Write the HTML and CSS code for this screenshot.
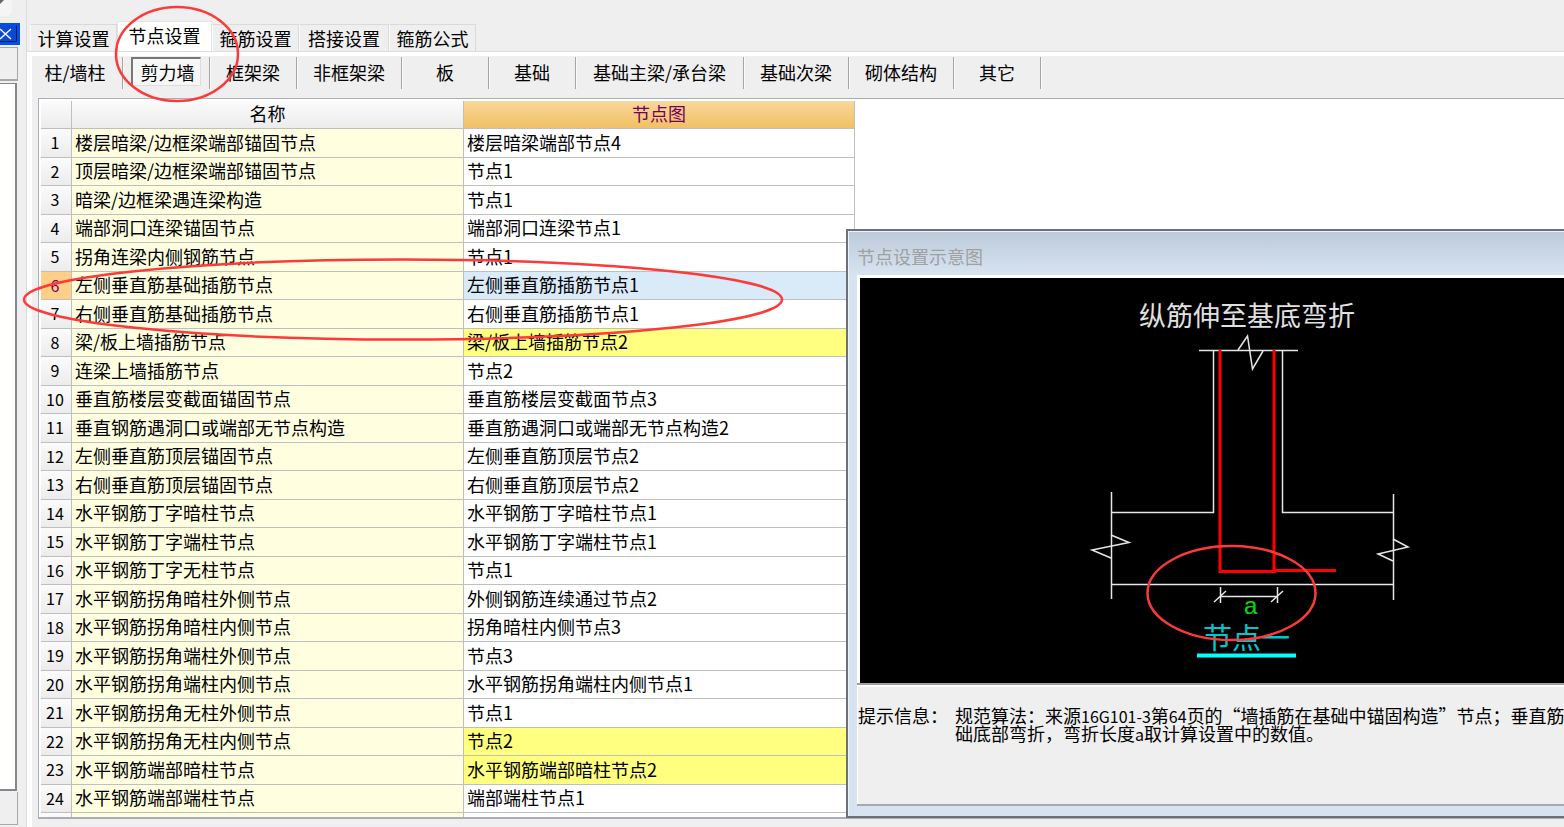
FILE: index.html
```html
<!DOCTYPE html>
<html lang="zh-CN">
<head>
<meta charset="utf-8">
<title>节点设置</title>
<link rel="stylesheet" href="styles.css">
</head>
<body>
<div class="app">
  <aside class="dock">
    <svg class="dock-corner" width="12" height="16" viewBox="0 0 12 16" aria-hidden="true"><path d="M0 0h12v12l-4 4H0z" fill="#f5f5f5"/><path d="M0 0h4L0 4z" fill="#666"/></svg>
    <button class="dock-close" type="button" aria-label="关闭"><svg width="17" height="18" viewBox="0 0 17 18"><path d="M0 4l11 10M11 4L0 14" stroke="#fff" stroke-width="1.3" fill="none"/></svg></button>
    <div class="dock-head"></div>
    <div class="dock-list"></div>
    <div class="dock-foot"></div>
  </aside>
  <main class="main">
    <nav class="tabs">
      <button class="tab" type="button">计算设置</button>
      <button class="tab tab-on" type="button">节点设置</button>
      <button class="tab" type="button">箍筋设置</button>
      <button class="tab" type="button">搭接设置</button>
      <button class="tab" type="button">箍筋公式</button>
    </nav>
    <section class="page">
      <div class="kinds">
        <div class="kind kind-first"><button type="button">柱/墙柱</button></div>
        <div class="kind"><button class="pressed" type="button">剪力墙</button></div>
        <div class="kind"><button type="button">框架梁</button></div>
        <div class="kind kind-mid"><button type="button">非框架梁</button></div>
        <div class="kind"><button type="button">板</button></div>
        <div class="kind"><button type="button">基础</button></div>
        <div class="kind kind-wide"><button type="button">基础主梁/承台梁</button></div>
        <div class="kind kind-mid"><button type="button">基础次梁</button></div>
        <div class="kind kind-mid"><button type="button">砌体结构</button></div>
        <div class="kind"><button type="button">其它</button></div>
      </div>
      <div class="grid">
        <table>
          <colgroup><col class="c-num"><col class="c-name"><col class="c-node"></colgroup>
          <thead><tr><th></th><th>名称</th><th class="picked">节点图</th></tr></thead>
          <tbody>
            <tr><th>1</th><td>楼层暗梁/边框梁端部锚固节点</td><td>楼层暗梁端部节点4</td></tr>
            <tr><th>2</th><td>顶层暗梁/边框梁端部锚固节点</td><td>节点1</td></tr>
            <tr><th>3</th><td>暗梁/边框梁遇连梁构造</td><td>节点1</td></tr>
            <tr><th>4</th><td>端部洞口连梁锚固节点</td><td>端部洞口连梁节点1</td></tr>
            <tr><th>5</th><td>拐角连梁内侧钢筋节点</td><td>节点1</td></tr>
            <tr class="current"><th>6</th><td>左侧垂直筋基础插筋节点</td><td>左侧垂直筋插筋节点1</td></tr>
            <tr><th>7</th><td>右侧垂直筋基础插筋节点</td><td>右侧垂直筋插筋节点1</td></tr>
            <tr class="changed"><th>8</th><td>梁/板上墙插筋节点</td><td>梁/板上墙插筋节点2</td></tr>
            <tr><th>9</th><td>连梁上墙插筋节点</td><td>节点2</td></tr>
            <tr><th>10</th><td>垂直筋楼层变截面锚固节点</td><td>垂直筋楼层变截面节点3</td></tr>
            <tr><th>11</th><td>垂直钢筋遇洞口或端部无节点构造</td><td>垂直筋遇洞口或端部无节点构造2</td></tr>
            <tr><th>12</th><td>左侧垂直筋顶层锚固节点</td><td>左侧垂直筋顶层节点2</td></tr>
            <tr><th>13</th><td>右侧垂直筋顶层锚固节点</td><td>右侧垂直筋顶层节点2</td></tr>
            <tr><th>14</th><td>水平钢筋丁字暗柱节点</td><td>水平钢筋丁字暗柱节点1</td></tr>
            <tr><th>15</th><td>水平钢筋丁字端柱节点</td><td>水平钢筋丁字端柱节点1</td></tr>
            <tr><th>16</th><td>水平钢筋丁字无柱节点</td><td>节点1</td></tr>
            <tr><th>17</th><td>水平钢筋拐角暗柱外侧节点</td><td>外侧钢筋连续通过节点2</td></tr>
            <tr><th>18</th><td>水平钢筋拐角暗柱内侧节点</td><td>拐角暗柱内侧节点3</td></tr>
            <tr><th>19</th><td>水平钢筋拐角端柱外侧节点</td><td>节点3</td></tr>
            <tr><th>20</th><td>水平钢筋拐角端柱内侧节点</td><td>水平钢筋拐角端柱内侧节点1</td></tr>
            <tr><th>21</th><td>水平钢筋拐角无柱外侧节点</td><td>节点1</td></tr>
            <tr class="changed"><th>22</th><td>水平钢筋拐角无柱内侧节点</td><td>节点2</td></tr>
            <tr class="changed"><th>23</th><td>水平钢筋端部暗柱节点</td><td>水平钢筋端部暗柱节点2</td></tr>
            <tr><th>24</th><td>水平钢筋端部端柱节点</td><td>端部端柱节点1</td></tr>
            <tr><th></th><td></td><td></td></tr>
          </tbody>
        </table>
      </div>
    </section>
  </main>
</div>

<section class="window">
  <h2>节点设置示意图</h2>
  <div class="canvas">
    <svg width="704" height="405" viewBox="860 278 704 405" role="img" aria-label="节点一">
      <text class="cad-title" x="1139" y="326">纵筋伸至基底弯折</text>
      <g fill="none" stroke="#e6e6e6" stroke-width="1.5">
        <path d="M1199 350.500H1298M1213.500 350V512.500H1111M1282.500 350V512.500H1393M1111.500 492V599M1393.500 494V600M1111 584.500H1393"/>
        <path d="M1238 350L1247.500 336L1252.500 369L1263 351"/>
        <path d="M1111 535L1129 542.500L1092 550L1111 558M1393 539L1408 547L1378 554L1393 561"/>
        <path d="M1220.500 587V603M1277.500 587V603M1220 596.500H1278M1214 602L1226 591M1271 602L1283 591"/>
      </g>
      <path d="M1220 350V571.500H1276M1274 350V570.500H1336" fill="none" stroke="#f00" stroke-width="3"/>
      <text class="cad-dim" x="1244" y="614">a</text>
      <text class="cad-name" x="1203" y="649">节点一</text>
      <path d="M1197 655.500H1296" stroke="#0ff" stroke-width="4"/>
    </svg>
  </div>
  <dl class="hint">
    <dt>提示信息：</dt>
    <dd>规范算法：来源<span class="code">16G101-3</span>第<span class="code">64</span>页的“墙插筋在基础中锚固构造”节点；垂直筋<br>础底部弯折，弯折长度<span class="code">a</span>取计算设置中的数值。</dd>
  </dl>
</section>

<svg class="marks" width="1564" height="827" viewBox="0 0 1564 827" aria-hidden="true">
  <g fill="none" stroke="#fd3a3a" stroke-width="2.500">
    <ellipse cx="177" cy="54" rx="61" ry="47"/>
    <ellipse cx="403" cy="299.500" rx="379" ry="40"/>
    <ellipse cx="1231.500" cy="593" rx="84" ry="47"/>
  </g>
</svg>
</body>
</html>
```
FILE: styles.css
```css
* { box-sizing: border-box; }

body {
  margin: 0;
  overflow: hidden;
  background: #efefef;
  color: #000;
  font: 18px/18px "Noto Sans CJK SC", "Liberation Sans", sans-serif;
}

button {
  margin: 0;
  padding: 0;
  border: 0;
  background: none;
  color: inherit;
  font: inherit;
  white-space: nowrap;
}

.app { display: flex; height: 100vh; }

/* left dock */
.dock {
  display: flex;
  flex-direction: column;
  flex: none;
  width: 27px;
  border-right: 1px solid #dcdcdc;
}
.dock-corner { flex: none; margin-bottom: 7px; }
.dock-close {
  flex: none;
  display: flex;
  align-items: center;
  width: 20px;
  height: 22px;
  border: solid #0050e8;
  border-width: 3px 3px 3px 0;
  background: #0a48d8;
  box-shadow: inset -1px -1px #001c50;
}
.dock-head {
  flex: none;
  width: 18px;
  height: 34px;
  margin: 2px 0;
  border: solid #a8a8a8;
  border-width: 1px 1px 2px 0;
}
.dock-list {
  flex: 1;
  width: 17px;
  border: solid #828790;
  border-width: 1px 2px 2px 0;
  background: #fff;
}
.dock-foot {
  flex: none;
  width: 18px;
  height: 33px;
  margin: 1px 0 2px;
  border: solid #a8a8a8;
  border-width: 0 1px 1px 0;
}

/* tabs */
.main {
  display: flex;
  flex: 1;
  flex-direction: column;
  min-width: 0;
}
.tabs {
  display: flex;
  flex: none;
  align-items: flex-end;
  height: 52px;
  padding-left: 3px;
}
.tab {
  width: 90px;
  height: 28px;
  padding-bottom: 2px;
  border: 1px solid #dadada;
  border-left-color: #fafafa;
  border-bottom: 0;
}
.tab:first-child,
.tab:nth-child(3),
.tab:last-child { width: 87px; }
.tab-on {
  width: 95px;
  height: 31px;
  padding-bottom: 4px;
  border-color: #e4e4e4;
  background: #fff;
}

.page {
  display: flex;
  flex: 1;
  flex-direction: column;
  min-height: 0;
  padding-bottom: 8px;
  border: solid #fff;
  border-width: 4px 0 0 5px;
  box-shadow: 0 -1px #dcdcdc;
}
.kinds { display: flex; flex: none; height: 42px; }
.kind {
  display: flex;
  align-items: center;
  justify-content: center;
  flex: none;
  width: 87px;
  height: 32px;
  margin-top: 1px;
  padding-bottom: 3px;
  border-right: 1px solid #a5a5a5;
  box-shadow: 1px 0 #fafafa;
}
.kind-first { width: 91px; padding-right: 4px; }
.kind-mid { width: 105px; }
.kind-wide { width: 168px; }
.pressed {
  width: 70px;
  height: 29px;
  padding: 0 0 0 2px;
  border: solid #dcdcdc;
  border-width: 2px 1px 1px 2px;
  border-top-color: #777;
  border-left-color: #777;
  background: #f6f6f6;
}

/* grid */
.grid {
  flex: 1;
  min-height: 0;
  margin-left: 6px;
  padding: 2px 0 0 2px;
  overflow: hidden;
  border: solid #a9adb6;
  border-width: 1px 0 2px 1px;
  background: #fff;
}
table {
  width: 814px;
  border-collapse: separate;
  border-spacing: 0;
  table-layout: fixed;
}
.c-num { width: 31px; }
.c-name { width: 392px; }
.c-node { width: 391px; }
th, td {
  height: 28px;
  padding: 0 0 3px;
  border: solid #bfbfbf;
  border-width: 0 1px 1px 0;
  font-weight: 400;
  line-height: 18px;
  white-space: nowrap;
}
tbody tr:nth-child(odd) > * { height: 29px; }
th { background: linear-gradient(#fbfbfb, #ececec); }
td { padding-left: 3px; background: #fff; }
td:nth-child(2) { background: #ffffe0; }
tbody th { padding: 0 2px 2px 0; font-size: 16px; }
.picked {
  background: linear-gradient(#f9d79c, #f1c062);
  color: #720060;
}
.current th { background: #ffcf87; color: #720060; }
.current td:last-child { background: #d9eaf9; }
.changed td:last-child { background: #ffff80; }

/* floating window */
.window {
  position: absolute;
  top: 229px;
  right: 0;
  bottom: 9px;
  left: 846px;
  display: flex;
  flex-direction: column;
  padding: 0 0 10px 9px;
  overflow: hidden;
  border: solid #6c7078;
  border-width: 2px 0 2px 2px;
  background: linear-gradient(#bccad9, #d7e3f1 44px);
  box-shadow: inset 1px 1px #eef3f9;
}
.window h2 {
  flex: none;
  height: 44px;
  margin: 0;
  padding-top: 16px;
  color: #a0a0a0;
  font-size: 18px;
  font-weight: 400;
  line-height: 18px;
}
.canvas {
  flex: 1;
  min-height: 0;
  overflow: hidden;
  border: solid #fff;
  border-width: 3px 0 0 3px;
  background: #000;
}
.canvas svg { display: block; }
.cad-title { fill: #e0e0e0; font-size: 27px; }
.cad-dim { fill: #00e000; font: 24px "Liberation Sans", sans-serif; }
.cad-name { fill: #00c8d0; font-size: 29px; }
.hint {
  display: flex;
  flex: none;
  height: 123px;
  margin: 0;
  padding-top: 21px;
  border-top: 2px solid #a0a0a0;
  border-bottom: 2px solid #a5a8ad;
  background: #efefef;
  box-shadow: inset 1px 2px #fff;
  white-space: nowrap;
}
.hint dt { flex: none; width: 98px; padding-left: 1px; }
.hint dd { margin: 0; }
.code { font-size: 16px; line-height: 1; }

/* hand-drawn circles */
.marks {
  position: absolute;
  top: 0;
  left: 0;
  pointer-events: none;
}
```
